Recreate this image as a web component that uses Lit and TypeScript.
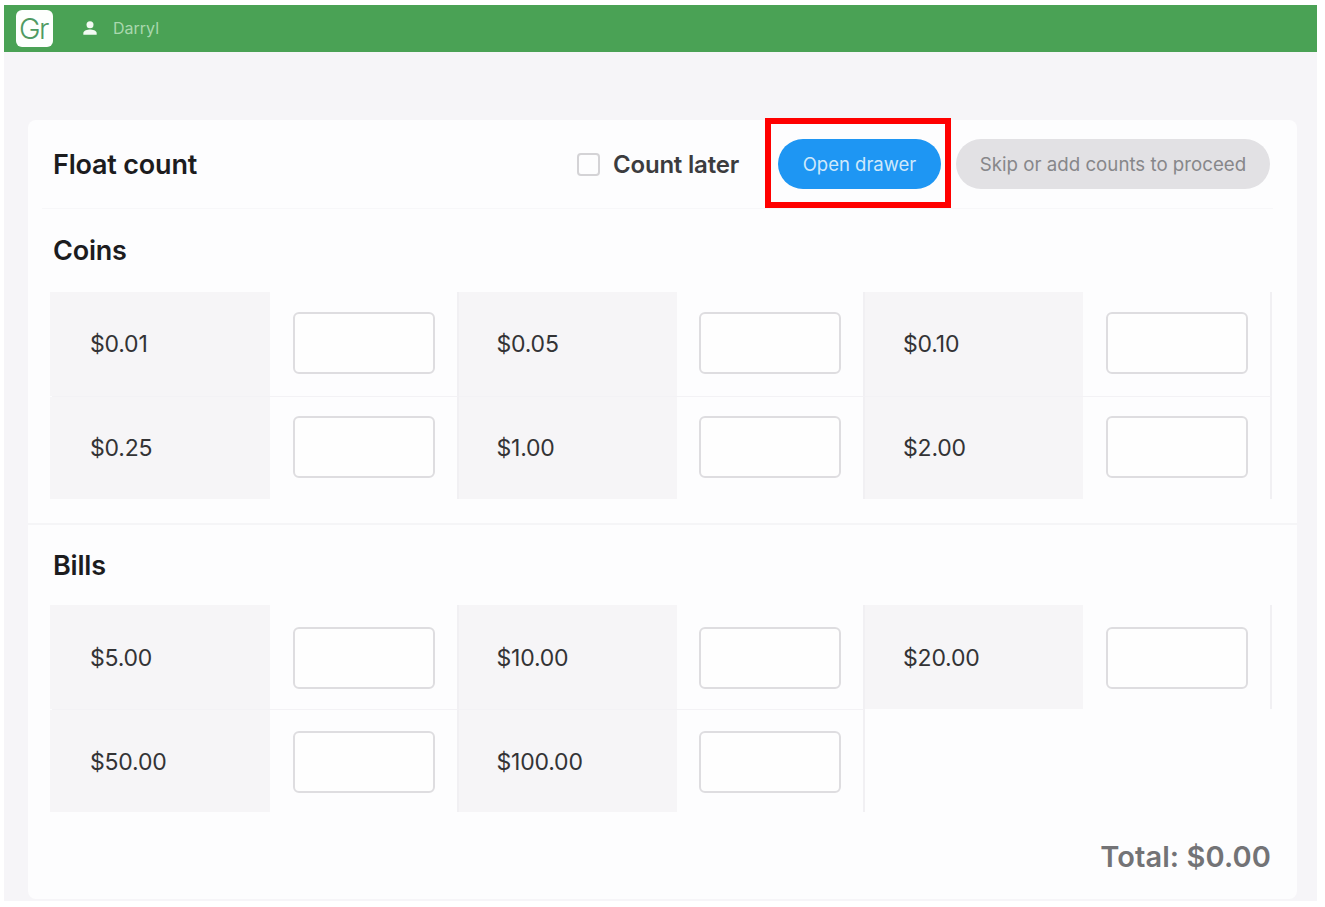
import { LitElement, html, css } from "lit";
import { customElement } from "lit/decorators.js";

const coins = ["$0.01", "$0.05", "$0.10", "$0.25", "$1.00", "$2.00"];
const bills = ["$5.00", "$10.00", "$20.00", "$50.00", "$100.00"];

@customElement("app-root")
export class AppRoot extends LitElement {
  static styles = css`
    :host { display: block; font-family: Inter, "Liberation Sans", sans-serif; background: #fff; color: #222; }
    .page { height: 907px; box-sizing: border-box; padding: 5px 8px 6px 4px; display: flex; flex-direction: column; overflow: hidden; }
    .bar { height: 47px; flex: none; background: #4aa255; display: flex; align-items: center; padding-left: 12px; box-sizing: border-box; }
    .logo { width: 37px; height: 37px; border-radius: 6px; background: #fdfffd; color: #4f9a62; font-size: 29px; letter-spacing: -1.5px; display: flex; align-items: center; justify-content: center; box-sizing: border-box; padding-right: 2px; font-weight: 300; }
    .user { display: flex; align-items: center; margin: 0 0 2px 27px; color: #a9d8ae; font-size: 16px; gap: 13px; }
    .user svg { width: 20px; height: 20px; display: block; }
    .content { flex: 1; background: #f6f5f8; padding: 68px 20px 2px 24px; display: flex; min-height: 0; }
    .card { flex: 1; background: #fdfdfe; border-radius: 8px; display: flex; flex-direction: column; }
    .head { height: 89px; flex: none; box-sizing: border-box; margin: 0 24px 0 14px; padding: 0 3px 0 11px; border-bottom: 1px solid #f7f7f9; display: flex; align-items: center; }
    .title { font-size: 27px; font-weight: 600; color: #1c1c1e; letter-spacing: -0.2px; flex: 1; }
    .later { display: flex; align-items: center; gap: 13px; font-size: 24px; font-weight: 600; color: #3c3c3e; letter-spacing: -0.2px; margin-right: 39px; }
    .check { width: 23px; height: 23px; box-sizing: border-box; border: 2px solid #d4d3d6; border-radius: 4px; background: #fdfdfe; }
    .btn { height: 50px; border-radius: 25px; border: 0; padding: 0; font: inherit; display: flex; align-items: center; justify-content: center; box-sizing: border-box; }
    .open { position: relative; width: 163px; background: #1e96f3; color: #cfe9fb; margin-right: 15px; font-size: 18.5px; }
    .open::after { content: ""; position: absolute; inset: -21px -10px -19px -13px; border: 6px solid #f00; }
    .skip { width: 314px; background: #e2e1e4; color: #87878a; font-size: 18.7px; }
    section { padding: 0 24px 0 24px; }
    h2 { margin: 0 0 0 1px; font-size: 27px; font-weight: 600; color: #1c1c1e; letter-spacing: -0.2px; height: 83px; display: flex; align-items: center; }
    .bills h2 { height: 80px; }
    .grid { display: grid; grid-template-columns: repeat(3, 406.5px); grid-auto-rows: 103.5px; }
    .cell { display: flex; box-sizing: border-box; border-right: 2px solid #f1f0f3; }
    .cell.second { border-top: 1px solid #f3f2f5; }
    .label { width: 218px; background: #f6f5f7; box-sizing: border-box; padding-left: 38px; display: flex; align-items: center; font-size: 23px; color: #333335; letter-spacing: -0.2px; flex: none; }
    .cell:nth-child(3n + 1) .label { margin-left: -2px; width: 220px; padding-left: 40px; }
    .slot { flex: 1; display: flex; align-items: center; padding-left: 22.5px; }
    .coins .slot { padding-bottom: 2px; }
    .bills .slot, .bills .label { padding-top: 2px; }
    .input { width: 142px; height: 62px; box-sizing: border-box; border: 2px solid #dedde0; border-radius: 6px; background: #fefefe; }
    .coins { border-bottom: 2px solid #f5f5f7; padding-bottom: 24px; }
    .foot { display: flex; justify-content: flex-end; padding: 27px 26px 0 0; font-size: 29px; font-weight: 600; color: #737376; letter-spacing: 0.1px; }
  `;

  private grid(items: string[]) {
    return html`<div class="grid">
      ${items.map((v, i) => html`<div class="cell ${i >= 3 ? "second" : ""}">
        <div class="label">${v}</div>
        <div class="slot"><div class="input"></div></div>
      </div>`)}
    </div>`;
  }

  render() {
    return html`<div class="page">
      <header class="bar">
        <div class="logo">Gr</div>
        <div class="user">
          <svg viewBox="0 0 24 24" fill="#f3faf3"><circle cx="12" cy="8" r="4.2"/><path d="M4 20v-2c0-2.8 5.3-4.2 8-4.2s8 1.400 8 4.200v2z"/></svg>
          <span>Darryl</span>
        </div>
      </header>
      <main class="content">
        <div class="card">
          <div class="head">
            <div class="title">Float count</div>
            <div class="later"><span class="check"></span>Count later</div>
            <button class="btn open">Open drawer</button>
            <button class="btn skip">Skip or add counts to proceed</button>
          </div>
          <section class="coins">
            <h2>Coins</h2>
            ${this.grid(coins)}
          </section>
          <section class="bills">
            <h2>Bills</h2>
            ${this.grid(bills)}
          </section>
          <div class="foot">Total: $0.00</div>
        </div>
      </main>
    </div>`;
  }
}
